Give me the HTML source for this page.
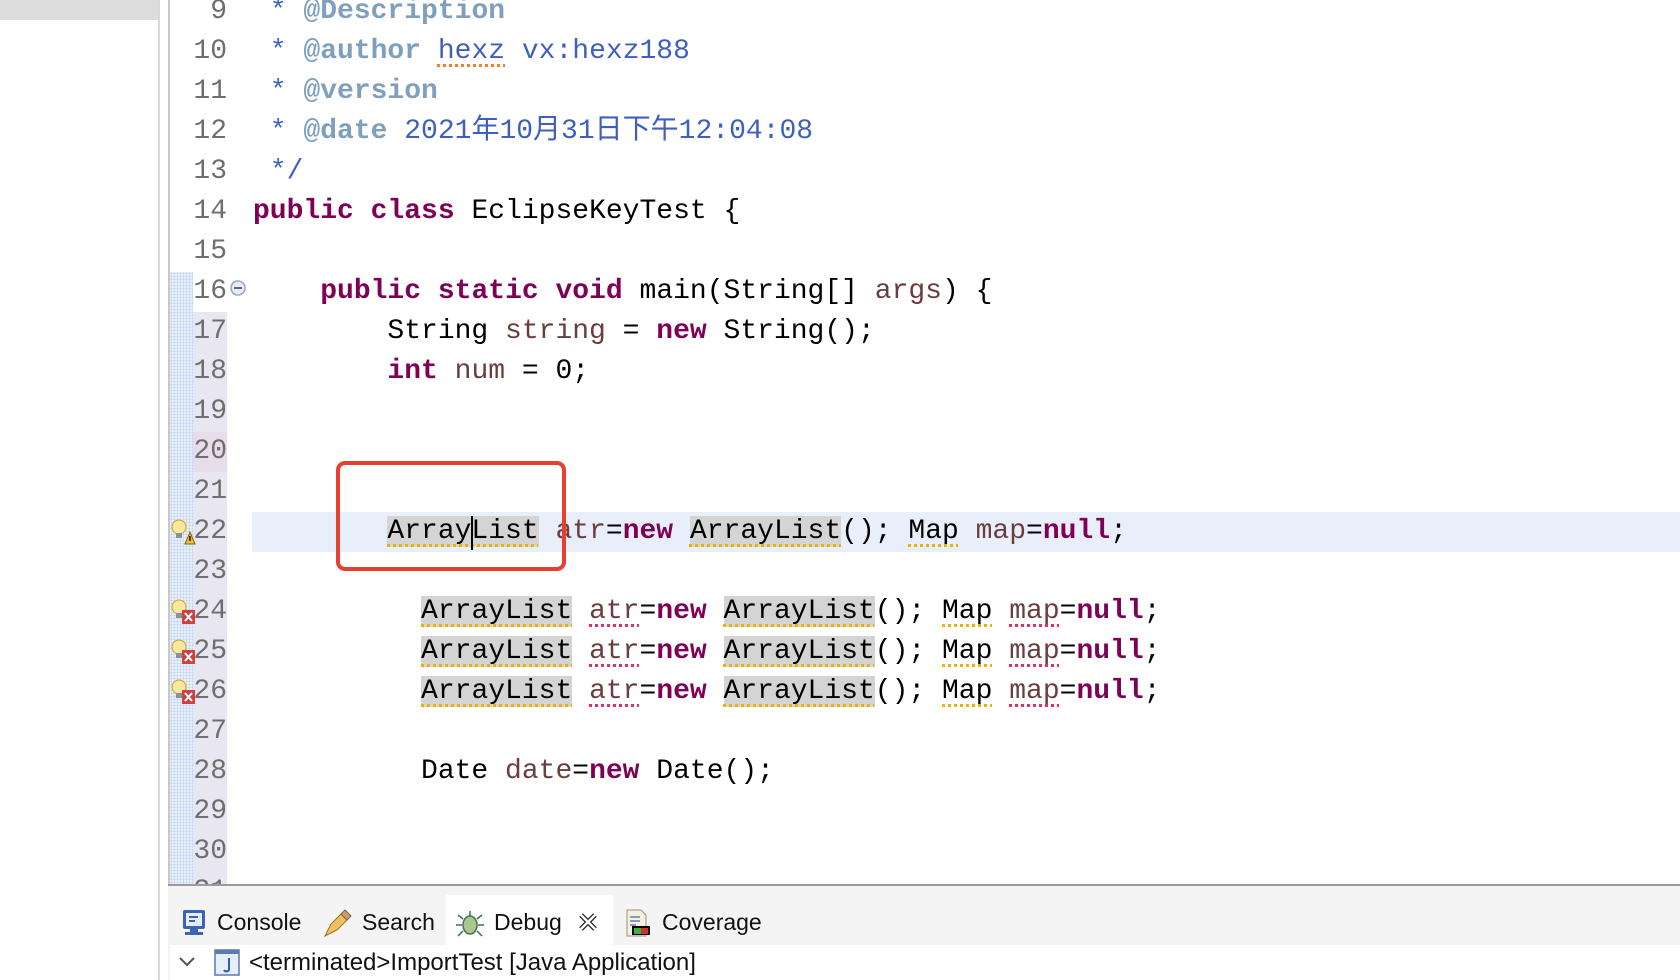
<!DOCTYPE html>
<html><head><meta charset="utf-8"><style>
*{margin:0;padding:0;box-sizing:border-box}
body{width:1680px;height:980px;background:#fff;position:relative;overflow:hidden;font-family:"Liberation Sans",sans-serif}
.side{position:absolute;left:0;top:0;width:160px;height:980px;background:#fff;border-right:2px solid #d8d8d8}
.sidebar-top{position:absolute;left:0;top:0;width:158px;height:20px;background:#dcdcdc}
.vline{position:absolute;left:168px;top:0;width:2px;height:886px;background:#c8c8c8}
.ruler{position:absolute;left:170px;top:272px;width:23px;height:612px;background-color:#e8f0fc;background-image:radial-gradient(#c0d0ee 1px,transparent 1px);background-size:3px 3px}
.lav{position:absolute;left:193px;top:312px;width:34px;height:572px;background:#e8e6f0}
.ln{position:absolute;left:170px;width:57px;text-align:right;font:28px "Liberation Mono",monospace;color:#6e6e6e;line-height:40px}
.code{position:absolute;left:253px;font:28px "Liberation Mono","Noto Sans CJK SC",monospace;line-height:40px;white-space:pre;color:#000}
.c{color:#3f5fbf}.t{color:#7f9fbf;font-weight:bold}.k{color:#7f0055;font-weight:bold}.v{color:#6a3e3e}
.h{background:#d4d4d4}
.wy{text-decoration:underline dotted #e8b400 3px;text-underline-offset:6px}
.wr{text-decoration:underline dotted #e0306a 3px;text-underline-offset:6px}
.wo{text-decoration:underline dotted #f08030 3px;text-underline-offset:6px}
.hl{position:absolute;left:252px;top:512px;width:1428px;height:40px;background:#e8eefa}
.box{position:absolute;left:336px;top:461px;width:230px;height:110px;border:4px solid #e84030;border-radius:9px}
.bottom{position:absolute;left:168px;top:884px;width:1512px;height:96px;background:#f4f4f4;border-top:2px solid #9a9a9a}
.tabs{position:absolute;left:170px;top:897px;height:50px;width:1510px;font-size:23px;color:#111}
.tab{position:absolute;top:0;height:50px;line-height:50px}
.tree{position:absolute;left:170px;top:945px;width:1510px;height:35px;background:#fff;font-size:24px;line-height:35px;color:#111}
.ico{position:absolute}
</style></head><body>
<div class="side"></div><div class="sidebar-top"></div>
<div class="vline"></div>
<div class="ruler"></div><div class="lav"></div>
<div style="position:absolute;left:193px;top:432px;width:34px;height:40px;background:#e6dcea"></div>
<div class="hl"></div>

<div class="ln" style="top:-8px">9</div>
<div class="ln" style="top:32px">10</div>
<div class="ln" style="top:72px">11</div>
<div class="ln" style="top:112px">12</div>
<div class="ln" style="top:152px">13</div>
<div class="ln" style="top:192px">14</div>
<div class="ln" style="top:232px">15</div>
<div class="ln" style="top:272px">16</div>
<div class="ln" style="top:312px">17</div>
<div class="ln" style="top:352px">18</div>
<div class="ln" style="top:392px">19</div>
<div class="ln" style="top:432px">20</div>
<div class="ln" style="top:472px">21</div>
<div class="ln" style="top:512px">22</div>
<div class="ln" style="top:552px">23</div>
<div class="ln" style="top:592px">24</div>
<div class="ln" style="top:632px">25</div>
<div class="ln" style="top:672px">26</div>
<div class="ln" style="top:712px">27</div>
<div class="ln" style="top:752px">28</div>
<div class="ln" style="top:792px">29</div>
<div class="ln" style="top:832px">30</div>
<div class="ln" style="top:872px">31</div>

<svg class="ico" style="left:229px;top:279px" width="18" height="18"><circle cx="9" cy="9" r="7" fill="#e8ecf4" stroke="#9aa6bc" stroke-width="1.5"/><rect x="5" y="8" width="8" height="2" fill="#5a6680"/></svg>
<svg class="ico" style="left:170px;top:518px" width="26" height="28"><circle cx="9" cy="9" r="7" fill="#fbe89a" stroke="#c8a030"/><rect x="6" y="15" width="6" height="5" fill="#8890a0"/><path d="M15 26 L20 14 L25 26Z" fill="#f0c030" stroke="#806010"/><rect x="19.3" y="18" width="1.4" height="5" fill="#000"/></svg>
<svg class="ico" style="left:170px;top:598px" width="26" height="28"><circle cx="9" cy="9" r="7" fill="#fbe89a" stroke="#c8a030"/><rect x="6" y="15" width="6" height="5" fill="#8890a0"/><rect x="12" y="12" width="13" height="14" fill="#d04040"/><path d="M15 15l7 8M22 15l-7 8" stroke="#fff" stroke-width="2"/></svg>
<svg class="ico" style="left:170px;top:638px" width="26" height="28"><circle cx="9" cy="9" r="7" fill="#fbe89a" stroke="#c8a030"/><rect x="6" y="15" width="6" height="5" fill="#8890a0"/><rect x="12" y="12" width="13" height="14" fill="#d04040"/><path d="M15 15l7 8M22 15l-7 8" stroke="#fff" stroke-width="2"/></svg>
<svg class="ico" style="left:170px;top:678px" width="26" height="28"><circle cx="9" cy="9" r="7" fill="#fbe89a" stroke="#c8a030"/><rect x="6" y="15" width="6" height="5" fill="#8890a0"/><rect x="12" y="12" width="13" height="14" fill="#d04040"/><path d="M15 15l7 8M22 15l-7 8" stroke="#fff" stroke-width="2"/></svg>

<div class="code" style="top:-8px"><span class="c"> * </span><span class="t">@Description</span></div>
<div class="code" style="top:32px"><span class="c"> * </span><span class="t">@author</span><span class="c"> <span class="wo">hexz</span> vx:hexz188</span></div>
<div class="code" style="top:72px"><span class="c"> * </span><span class="t">@version</span></div>
<div class="code" style="top:112px"><span class="c"> * </span><span class="t">@date</span><span class="c"> 2021年10月31日下午12:04:08</span></div>
<div class="code" style="top:152px"><span class="c"> */</span></div>
<div class="code" style="top:192px"><span class="k">public</span> <span class="k">class</span> EclipseKeyTest {</div>
<div class="code" style="top:272px">    <span class="k">public</span> <span class="k">static</span> <span class="k">void</span> main(String[] <span class="v">args</span>) {</div>
<div class="code" style="top:312px">        String <span class="v">string</span> = <span class="k">new</span> String();</div>
<div class="code" style="top:352px">        <span class="k">int</span> <span class="v">num</span> = 0;</div>
<div class="code" style="top:512px">        <span class="h wy">ArrayList</span> <span class="v">atr</span>=<span class="k">new</span> <span class="h wy">ArrayList</span>(); <span class="wy">Map</span> <span class="v">map</span>=<span class="k">null</span>;</div>
<div style="position:absolute;left:471px;top:516px;width:2px;height:34px;background:#000"></div>
<div class="code" style="top:592px">          <span class="h wy">ArrayList</span> <span class="v wr">atr</span>=<span class="k">new</span> <span class="h wy">ArrayList</span>(); <span class="wy">Map</span> <span class="v wr">map</span>=<span class="k">null</span>;</div>
<div class="code" style="top:632px">          <span class="h wy">ArrayList</span> <span class="v wr">atr</span>=<span class="k">new</span> <span class="h wy">ArrayList</span>(); <span class="wy">Map</span> <span class="v wr">map</span>=<span class="k">null</span>;</div>
<div class="code" style="top:672px">          <span class="h wy">ArrayList</span> <span class="v wr">atr</span>=<span class="k">new</span> <span class="h wy">ArrayList</span>(); <span class="wy">Map</span> <span class="v wr">map</span>=<span class="k">null</span>;</div>
<div class="code" style="top:752px">          Date <span class="v">date</span>=<span class="k">new</span> Date();</div>
<div class="box"></div>

<div class="bottom"></div>
<div style="position:absolute;left:446px;top:895px;width:167px;height:50px;background:#fff"></div>
<div class="tabs">
 <svg class="ico" style="left:11px;top:12px" width="26" height="28"><rect x="2" y="1" width="22" height="19" rx="2" fill="#3c64b4"/><rect x="5" y="4" width="16" height="13" fill="#e8eef8"/><path d="M8 8h9M8 12h6" stroke="#3c64b4" stroke-width="2"/><rect x="9" y="20" width="8" height="3" fill="#3c64b4"/><rect x="4" y="23" width="18" height="3" fill="#3c64b4"/></svg>
 <div class="tab" style="left:47px">Console</div>
 <svg class="ico" style="left:151px;top:11px" width="32" height="30"><path d="M4 28 L10 16 L20 6 L26 12 L16 22Z" fill="#f0c060" stroke="#a07020"/><path d="M20 6 L24 2 L30 8 L26 12Z" fill="#c8a070" stroke="#806040"/></svg>
 <div class="tab" style="left:192px">Search</div>
 <svg class="ico" style="left:285px;top:12px" width="30" height="30"><ellipse cx="15" cy="16" rx="7" ry="9" fill="#a8c890" stroke="#507050" stroke-width="1.5"/><path d="M8 10l-5-4M22 10l5-4M7 16H1M23 16h6M8 22l-5 5M22 22l5 5M15 7V2" stroke="#307060" stroke-width="1.5"/></svg>
 <div class="tab" style="left:324px">Debug</div>
 <svg class="ico" style="left:408px;top:15px" width="20" height="20"><path d="M3 3l14 14M17 3L3 17" stroke="#222" stroke-width="5"/><path d="M3 3l14 14M17 3L3 17" stroke="#fff" stroke-width="2.5"/></svg>
 <svg class="ico" style="left:454px;top:11px" width="28" height="30"><path d="M3 2h14l5 5v21H3z" fill="#f4f0e0" stroke="#a09070"/><path d="M6 9h10M6 13h10M6 17h6" stroke="#6080b0" stroke-width="1.5"/><rect x="8" y="18" width="18" height="9" fill="#000"/><rect x="10" y="20" width="7" height="6" fill="#40b040"/><rect x="17" y="20" width="7" height="6" fill="#d03030"/></svg>
 <div class="tab" style="left:492px">Coverage</div>
</div>
<div class="tree">
 <svg class="ico" style="left:8px;top:10px" width="18" height="14"><path d="M2 3l7 7 7-7" stroke="#555" stroke-width="2" fill="none"/></svg>
 <svg class="ico" style="left:44px;top:4px" width="26" height="27"><rect x="1" y="1" width="24" height="25" fill="#e8eef8" stroke="#5a7ab0" stroke-width="1.5"/><rect x="1" y="1" width="24" height="4" fill="#5a7ab0"/><path d="M15 9v11c0 3-4 3-5 1" stroke="#3060a0" stroke-width="2" fill="none"/></svg>
 <div style="position:absolute;left:79px;top:0">&lt;terminated&gt;ImportTest [Java Application]</div>
</div>
</body></html>
